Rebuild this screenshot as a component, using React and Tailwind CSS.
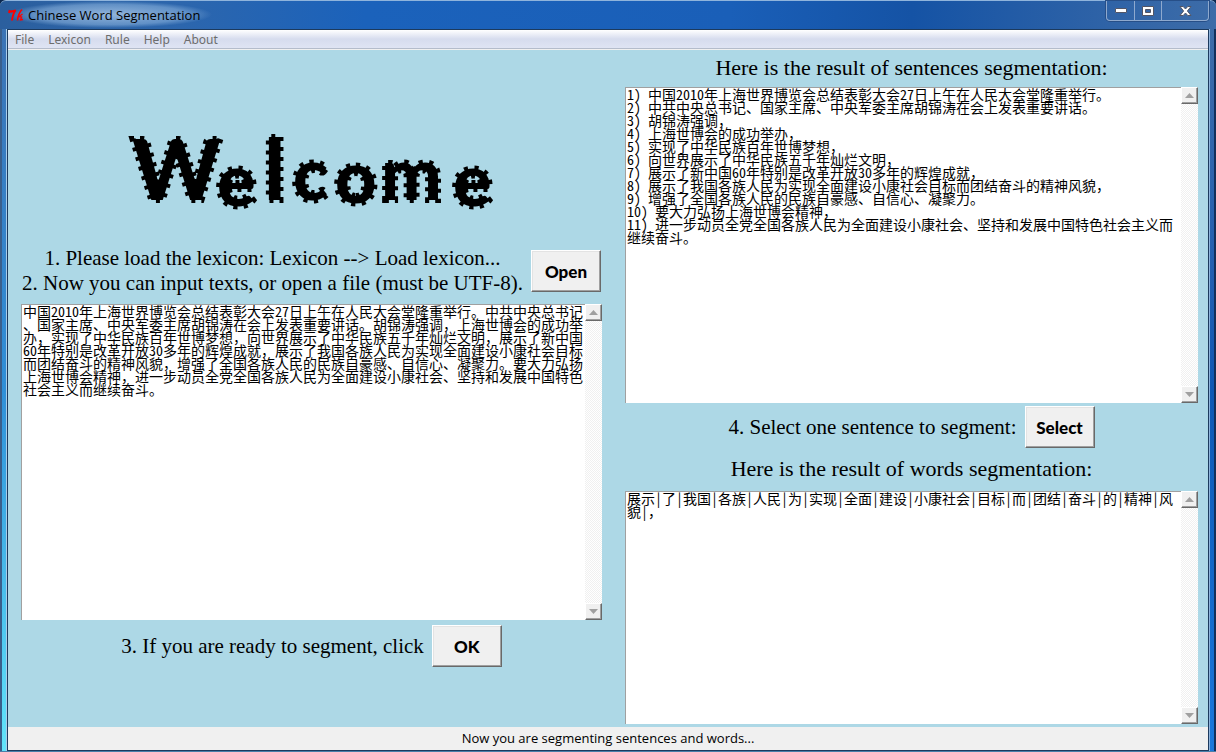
import React, { useId } from "react";

const SOURCE_TEXT =
  "中国2010年上海世界博览会总结表彰大会27日上午在人民大会堂隆重举行。中共中央总书记、国家主席、中央军委主席胡锦涛在会上发表重要讲话。胡锦涛强调，上海世博会的成功举办，实现了中华民族百年世博梦想，向世界展示了中华民族五千年灿烂文明，展示了新中国60年特别是改革开放30多年的辉煌成就，展示了我国各族人民为实现全面建设小康社会目标而团结奋斗的精神风貌，增强了全国各族人民的民族自豪感、自信心、凝聚力。要大力弘扬上海世博会精神，进一步动员全党全国各族人民为全面建设小康社会、坚持和发展中国特色社会主义而继续奋斗。";

const SENTENCES = [
  "中国2010年上海世界博览会总结表彰大会27日上午在人民大会堂隆重举行。",
  "中共中央总书记、国家主席、中央军委主席胡锦涛在会上发表重要讲话。",
  "胡锦涛强调，",
  "上海世博会的成功举办，",
  "实现了中华民族百年世博梦想，",
  "向世界展示了中华民族五千年灿烂文明，",
  "展示了新中国60年特别是改革开放30多年的辉煌成就，",
  "展示了我国各族人民为实现全面建设小康社会目标而团结奋斗的精神风貌，",
  "增强了全国各族人民的民族自豪感、自信心、凝聚力。",
  "要大力弘扬上海世博会精神，",
  "进一步动员全党全国各族人民为全面建设小康社会、坚持和发展中国特色社会主义而继续奋斗。",
];

const WORDS =
  "展示|了|我国|各族|人民|为|实现|全面|建设|小康社会|目标|而|团结|奋斗|的|精神|风貌|，";

const MENUS = ["File", "Lexicon", "Rule", "Help", "About"];

function ScrollArrow({ label, points }) {
  return (
    <button
      type="button"
      disabled
      aria-label={label}
      className="flex h-[17px] w-[17px] items-center justify-center border border-t-white border-l-white border-r-[#696969] border-b-[#696969] bg-[#f0f0f0] shadow-[inset_-1px_-1px_0_#a0a0a0]"
    >
      <svg width="9" height="5" viewBox="0 0 9 5" aria-hidden="true">
        <polygon points={points} fill="#a0a0a0" />
      </svg>
    </button>
  );
}

function TextPane({ label, value, rows, className = "" }) {
  const id = useId();
  return (
    <div className={`flex ${className}`}>
      <label htmlFor={id} className="sr-only">
        {label}
      </label>
      <textarea
        id={id}
        rows={rows}
        defaultValue={value}
        spellCheck={false}
        className="block min-w-0 flex-1 resize-none overflow-hidden rounded-none border-t border-l border-[#a0a0a0] bg-white pb-[3px] pl-px font-['Noto_Sans_Mono_CJK_SC','Noto_Sans_CJK_SC',sans-serif] text-[14px] leading-[13px] text-black outline-none [line-break:anywhere]"
      />
      <div className="flex w-[17px] flex-col justify-between bg-[repeating-conic-gradient(#f0f0f0_0_25%,#ffffff_0_50%)] bg-[length:2px_2px]">
        <ScrollArrow label="Scroll up" points="4.5,0 9,5 0,5" />
        <ScrollArrow label="Scroll down" points="0,0 9,0 4.5,5" />
      </div>
    </div>
  );
}

function PushButton({ children }) {
  return (
    <button
      type="button"
      className="h-[42px] w-[70px] shrink-0 border border-t-white border-l-white border-r-[#696969] border-b-[#696969] bg-[#f0f0f0] font-['Lato',sans-serif] text-[17px] font-black text-black shadow-[inset_-1px_-1px_0_#a0a0a0,inset_1px_1px_0_#e3e3e3]"
    >
      {children}
    </button>
  );
}

/* Heading lettering: a short dashed outline gives every glyph cog-like teeth. */
function WelcomeSign() {
  return (
    <svg width="380" height="128" viewBox="0 0 380 128" role="img" aria-label="Welcome">
      <text className="fill-black stroke-black font-['Lato',sans-serif] text-[72px] font-black [stroke-dasharray:4_6] [stroke-width:6px]">
        <tspan x="10" y="116" className="text-[84px]">W</tspan>
        <tspan x="95" y="122">e</tspan>
        <tspan x="142" y="116" className="text-[84px]">l</tspan>
        <tspan x="171" y="116">c</tspan>
        <tspan x="213" y="119">o</tspan>
        <tspan x="259" y="116">m</tspan>
        <tspan x="331" y="122">e</tspan>
      </text>
    </svg>
  );
}

function TitleBar() {
  return (
    <header className="flex h-[29px] items-start justify-between rounded-t-md border-t border-[#8fb4dc] bg-[linear-gradient(90deg,#2b5f9e_0,#2c66ad_15%,#1b62bb_30%,#1a5fb8_60%,#1553a5_75%,#3d6ca8_100%)] pr-[7px] pl-2">
      <div className="flex h-[27px] items-center gap-1 rounded-full bg-[radial-gradient(closest-side,rgba(170,200,232,0.8),rgba(140,180,222,0.55)_75%,transparent)] pr-3">
        <svg width="16" height="14" viewBox="0 0 16 14" fill="none" stroke="#ff0000" aria-hidden="true">
          <path d="M1 5 L1.5 3 L3 3.6 L8 2.5 M7.5 2.5 C5.5 5 4.5 8 4 12.5" strokeWidth="2" />
          <path d="M14 1.5 C11.5 4 10 8 9.5 12.5" strokeWidth="1.6" />
          <path d="M14.5 6 L11 8.6 L13.6 9 L12.6 12 L15 11.5" strokeWidth="1.3" />
        </svg>
        <h1 className="font-['Open_Sans','Noto_Sans',sans-serif] text-[13px] leading-[18px] text-black">
          Chinese Word Segmentation
        </h1>
      </div>
      <div className="flex h-5 rounded-b border border-t-0 border-[#8ea9ce] shadow-[0_0_0_1px_#274f88]">
        <button type="button" aria-label="Minimize" className="flex w-7 items-center justify-center border-r border-[#8ea9ce]">
          <svg width="12" height="6" aria-hidden="true">
            <rect x="0.5" y="0.5" width="11" height="4" rx="0.5" fill="#fff" stroke="#535666" />
          </svg>
        </button>
        <button type="button" aria-label="Maximize" className="flex w-[27px] items-center justify-center border-r border-[#8ea9ce]">
          <svg width="12" height="10" aria-hidden="true">
            <path fillRule="evenodd" d="M.5 .5h11v9h-11z M3.5 3.5v3h5v-3z" fill="#fff" stroke="#535666" />
          </svg>
        </button>
        <button type="button" aria-label="Close" className="flex w-[46px] items-center justify-center">
          <svg width="13" height="10" viewBox="0 0 13 10" aria-hidden="true">
            <path
              d="M1 .5h3.2L6.5 3 8.8.5H12L8.4 5l3.6 4.5H8.8L6.5 7 4.2 9.5H1L4.6 5z"
              fill="#fff"
              stroke="#535666"
            />
          </svg>
        </button>
      </div>
    </header>
  );
}

export default function App() {
  const numbered = SENTENCES.map((s, i) => `${i + 1}) ${s}`).join("\n");
  return (
    <div className="flex min-h-screen flex-col bg-[#0b2850]">
      <TitleBar />
      <div className="flex flex-1">
        <div className="w-[7px] border-r border-l-2 border-r-[#a9cdea] border-l-[#3a5f8c] bg-linear-to-b from-[#3a73b5] via-[#2f8fd8] to-[#62e4fb]" />
        <div className="flex min-w-0 flex-1 flex-col border border-[#1c3a5e] bg-[#add8e6]">
          <nav
            aria-label="Main"
            className="flex h-[19px] items-center gap-[14px] border-b border-[#b4bccb] bg-linear-to-b from-white via-[#d6dcee] to-[#dfe4f3] px-[7px] pt-[2px]"
          >
            {MENUS.map((m) => (
              <button key={m} type="button" className="font-['Noto_Sans',sans-serif] text-[12px] leading-4 text-[#6d6d6d]">
                {m}
              </button>
            ))}
          </nav>
          <main className="grid flex-1 grid-cols-[607fr_593fr] border-t border-[#f0f0f0] font-['Liberation_Serif',serif] text-[21px] leading-[25px] text-black">
            <section className="flex flex-col px-[13px]">
              <div className="flex h-[196px] items-center justify-center">
                <WelcomeSign />
              </div>
              <div className="flex items-center justify-center gap-2 pb-2 whitespace-nowrap">
                <p className="text-center">
                  1. Please load the lexicon: Lexicon --&gt; Load lexicon...
                  <br />
                  2. Now you can input texts, or open a file (must be UTF-8).
                </p>
                <PushButton>Open</PushButton>
              </div>
              <TextPane label="Text to segment" value={SOURCE_TEXT} rows={24} />
              <div className="flex items-center justify-center gap-2 pt-[5px]">
                <p>3. If you are ready to segment, click</p>
                <PushButton>OK</PushButton>
              </div>
            </section>
            <section className="flex flex-col px-[10px] pb-[3px]">
              <h2 className="text-center text-[22px] leading-[36px]">Here is the result of sentences segmentation:</h2>
              <TextPane label="Sentences" value={numbered} rows={24} className="pt-px" />
              <div className="flex items-center justify-center gap-2 pt-[3px]">
                <p>4. Select one sentence to segment:</p>
                <PushButton>Select</PushButton>
              </div>
              <h2 className="text-center text-[22px] leading-[42px]">Here is the result of words segmentation:</h2>
              <TextPane label="Words" value={WORDS} rows={17} className="flex-1 pt-px" />
            </section>
          </main>
          <footer className="bg-[#f0f0f0] text-center font-['Open_Sans','Noto_Sans',sans-serif] text-[13px] leading-[23px] text-black">
            Now you are segmenting sentences and words...
          </footer>
        </div>
        <div className="w-[7px] border-r-2 border-l border-r-[#12305c] border-l-[#8fb4dc] bg-linear-to-b from-[#3d6ca8] via-[#0e58b4] to-[#1a78dc]" />
      </div>
      <div className="h-px bg-[#4a7fa8]" />
    </div>
  );
}
